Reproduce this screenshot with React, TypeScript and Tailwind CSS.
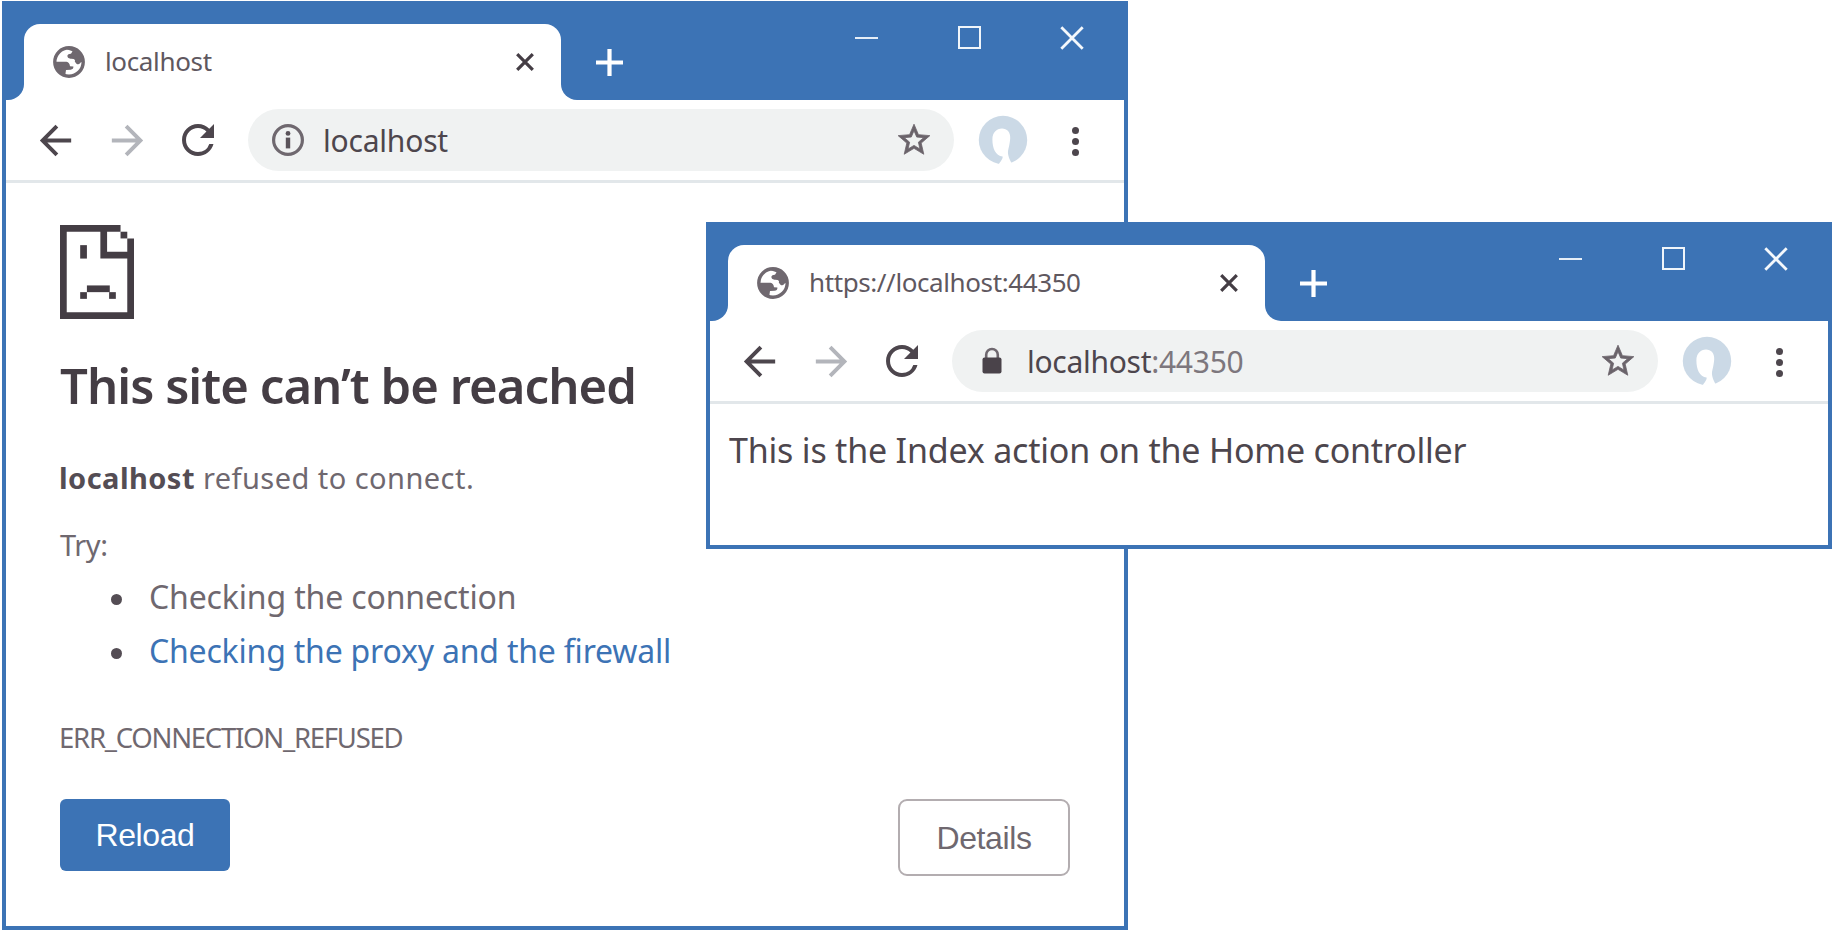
import type { ReactNode } from 'react';

function GlobeIcon() {
  return (
    <svg viewBox="0 0 32 32" className="size-8 shrink-0" fill="#6f686f">
      <circle cx="16" cy="16" r="14.2" fill="none" stroke="#6f686f" strokeWidth="3.4" />
      <path d="M13 3 Q18 .6 23 3 Q31 8 30.6 16.5 Q28.5 15.2 27 17.2 Q25.5 19.2 23.2 17.4 Q21 15.2 22 14 Q21 12.6 17.5 12.8 Q14.2 12.4 14.4 9.6 Q15 7.6 18 7.8 L19.5 5.2 Z" />
      <path d="M2 15.8 L13.5 15.8 Q16.6 16.4 17 20.2 L20.4 20.6 Q20.6 23.4 17.6 23.8 L13 24 L12.2 29.6 Q3 26.6 2 15.8 Z" />
    </svg>
  );
}

function InfoIcon() {
  return (
    <svg viewBox="0 0 34 34" className="size-[34px]">
      <circle cx="17" cy="17" r="14.4" fill="none" stroke="#6f686f" strokeWidth="3.2" />
      <circle cx="17" cy="10.4" r="2.4" fill="#5a535a" />
      <rect x="14.8" y="14.6" width="4.4" height="10.8" fill="#5a535a" />
    </svg>
  );
}

function LockIcon() {
  return (
    <svg viewBox="0 0 34 34" className="size-[34px]">
      <path d="M11.2 15 V10.8 a5.8 5.8 0 0 1 11.6 0 V15" fill="none" stroke="#6f686f" strokeWidth="2.6" />
      <rect x="7.5" y="13.5" width="19" height="16" rx="2" fill="#4a434a" />
    </svg>
  );
}

function AvatarIcon() {
  return (
    <svg viewBox="0 0 50 50" className="size-[50px] shrink-0">
      <circle cx="25" cy="25" r="24.2" fill="#cbd9e6" />
      <path
        d="M24 13.5 C29 13.5 32.6 17 32.2 23.5 C31.8 29 30.6 33 30 36 C29.6 40 31.2 44 34.5 50 H20 C23 46 25 43.5 24.6 41.4 C17.4 41 14.4 33 14.4 24.5 C14.4 17.5 18.5 13.5 24 13.5 Z"
        fill="#ffffff"
      />
    </svg>
  );
}

function SadPageIcon() {
  return (
    <svg viewBox="0 0 11 14" preserveAspectRatio="none" className="h-[94px] w-[74px]" fill="#443d44">
      <path d="M0 0H9V1H7V4H10V2H11V14H0ZM1 1V13H10V5H6V1Z" fillRule="evenodd" />
      <rect x="9" y="1" width="1" height="1" />
      <rect x="3" y="3" width="1" height="2" />
      <rect x="4" y="9" width="3.4" height="1" />
      <rect x="3" y="10" width="1" height="1" />
      <rect x="7.3" y="10" width="1" height="1" />
    </svg>
  );
}

function TitleBar({ title }: { title: ReactNode }) {
  return (
    <div className="flex h-[95px] items-end bg-[#3c73b5]">
      <div className="size-[18px] bg-white">
        <div className="size-full rounded-br-[16px] bg-[#3c73b5]" />
      </div>
      <div className="flex h-[76px] w-[537px] items-center rounded-t-[16px] bg-white pl-[29px] pr-[27px]">
        <GlobeIcon />
        <div className="ml-[20px] flex-1 pb-[2px] text-[26px] leading-[40px] text-[#5f585f]">{title}</div>
        <svg viewBox="0 0 18 18" className="size-[18px]" stroke="#443d44" strokeWidth="3.2">
          <path d="M1.2 1.2L16.8 16.8M16.8 1.2L1.2 16.8" />
        </svg>
      </div>
      <div className="size-[16px] bg-white">
        <div className="size-full rounded-bl-[16px] bg-[#3c73b5]" />
      </div>
      <svg viewBox="0 0 27 27" className="mb-[24px] ml-[19px] size-[27px]" stroke="#ffffff" strokeWidth="4.2">
        <path d="M13.5 0V27M0 13.5H27" />
      </svg>
      <div className="ml-auto flex h-[95px] items-start">
        <div className="flex h-[66px] w-[103px] items-center justify-center">
          <div className="h-[2.5px] w-[23px] bg-[#e6eef7]" />
        </div>
        <div className="flex h-[65px] w-[103px] items-center justify-center">
          <div className="size-[23px] border-2 border-[#f0f5fa]" />
        </div>
        <div className="flex h-[65px] w-[103px] items-center justify-center pr-px">
          <svg viewBox="0 0 24 24" className="size-6" stroke="#f4f8fc" strokeWidth="2.8">
            <path d="M1.3 1.3L22.7 22.7M22.7 1.3L1.3 22.7" />
          </svg>
        </div>
      </div>
    </div>
  );
}

function Toolbar({ icon, url }: { icon: ReactNode; url: ReactNode }) {
  return (
    <div className="flex h-[83px] items-center border-b-[3px] border-[#e2e7ea] pl-[26px]">
      <svg viewBox="0 0 24 24" className="size-[47px]" fill="#4d464d">
        <path d="M20 11H7.83l5.59-5.59L12 4l-8 8 8 8 1.41-1.41L7.83 13H20v-2z" />
      </svg>
      <svg viewBox="0 0 24 24" className="ml-[25px] size-[47px]" fill="#b3b5bb">
        <path d="M12 4l-1.41 1.41L16.17 11H4v2h12.17l-5.58 5.59L12 20l8-8z" />
      </svg>
      <svg viewBox="0 0 24 24" className="ml-[23px] size-[48px]" fill="#4d464d">
        <path d="M17.65 6.35A7.958 7.958 0 0 0 12 4c-4.42 0-7.99 3.58-7.99 8s3.57 8 7.99 8c3.73 0 6.84-2.55 7.73-6h-2.08A5.99 5.99 0 0 1 12 18c-3.31 0-6-2.69-6-6s2.69-6 6-6c1.66 0 3.14.69 4.22 1.78L13 11h7V4l-2.35 2.35z" />
      </svg>
      <div className="ml-[26px] flex h-[62px] w-[706px] items-center rounded-full bg-[#f0f2f2] pl-[23px] pr-[21px]">
        {icon}
        <div className="ml-[18px] flex-1 pt-px text-[30px] leading-[40px] text-[#4d464d]">{url}</div>
        <svg viewBox="0 0 24 24" className="size-[38px]" fill="#6a636a" stroke="#6a636a" strokeWidth=".5">
          <path d="M22 9.24l-7.19-.62L12 2 9.19 8.63 2 9.24l5.46 4.73L5.82 21 12 17.27 18.18 21l-1.63-7.03L22 9.24zM12 15.4l-3.76 2.27 1-4.28-3.32-2.88 4.38-.38L12 6.1l1.71 4.04 4.38.38-3.32 2.88 1 4.28L12 15.4z" />
        </svg>
      </div>
      <div className="ml-[24px]">
        <AvatarIcon />
      </div>
      <div className="ml-[44px] flex flex-col gap-[4px] pt-[2px]">
        <div className="size-[7px] rounded-full bg-[#4d464d]" />
        <div className="size-[7px] rounded-full bg-[#4d464d]" />
        <div className="size-[7px] rounded-full bg-[#4d464d]" />
      </div>
    </div>
  );
}

export default function App() {
  return (
    <div className="relative h-[931px] w-[1834px] overflow-hidden whitespace-nowrap bg-white font-['Noto_Sans','Open_Sans',sans-serif]">
      <section className="absolute left-[2px] top-[1px] h-[929px] w-[1126px] border-4 border-[#3c73b5] bg-white">
        <TitleBar title={<span className="tracking-[-0.35px]">localhost</span>} />
        <Toolbar icon={<InfoIcon />} url={<span className="tracking-[-0.2px]">localhost</span>} />
        <main className="flex flex-col pl-[54px] pr-[54px] pt-[42px] text-[#6f686f]">
          <SadPageIcon />
          <h1 className="mt-[36px] text-[49px] font-semibold leading-[60px] tracking-[-0.95px] text-[#443d44]">
            This site can’t be reached
          </h1>
          <p className="-ml-px mt-[43px] text-[29px] leading-[40px] tracking-[0.45px]">
            <strong className="font-bold text-[#544d54]">localhost</strong> refused to connect.
          </p>
          <p className="mt-[27px] text-[29px] leading-[40px] tracking-[-0.4px]">Try:</p>
          <ul className="mt-[5px] text-[32px] leading-[54px]">
            <li className="flex items-center gap-[27px] pl-[51px]">
              <span className="mt-[4px] size-[11px] rounded-full bg-[#544d54]" />
              <span className="tracking-[-0.15px]">Checking the connection</span>
            </li>
            <li className="flex items-center gap-[27px] pl-[51px]">
              <span className="mt-[4px] size-[11px] rounded-full bg-[#544d54]" />
              <a className="tracking-[-0.2px] text-[#3c73b5]">Checking the proxy and the firewall</a>
            </li>
          </ul>
          <p className="-ml-px mt-[40px] text-[27.5px] leading-[40px] tracking-[-1.25px]">ERR_CONNECTION_REFUSED</p>
          <div className="mt-[41px] flex items-start justify-between font-['Liberation_Sans',Arial,sans-serif] text-[32px] tracking-[-0.4px]">
            <button className="h-[72px] w-[170px] rounded-[6px] bg-[#3c73b5] text-white">Reload</button>
            <button className="h-[77px] w-[172px] rounded-[9px] border-2 border-[#b3adb0] bg-white">Details</button>
          </div>
        </main>
      </section>

      <section className="absolute left-[706px] top-[222px] h-[327px] w-[1126px] border-4 border-[#3c73b5] bg-white">
        <TitleBar title={<span className="tracking-[-0.4px]">https://localhost:44350</span>} />
        <Toolbar
          icon={<LockIcon />}
          url={
            <span className="tracking-[-0.28px]">
              localhost<span className="text-[#7d777d]">:44350</span>
            </span>
          }
        />
        <main className="pl-[19px] pt-[21px] text-[34px] leading-[50px] tracking-[-0.2px] text-[#4d464d]">
          This is the Index action on the Home controller
        </main>
      </section>
    </div>
  );
}
